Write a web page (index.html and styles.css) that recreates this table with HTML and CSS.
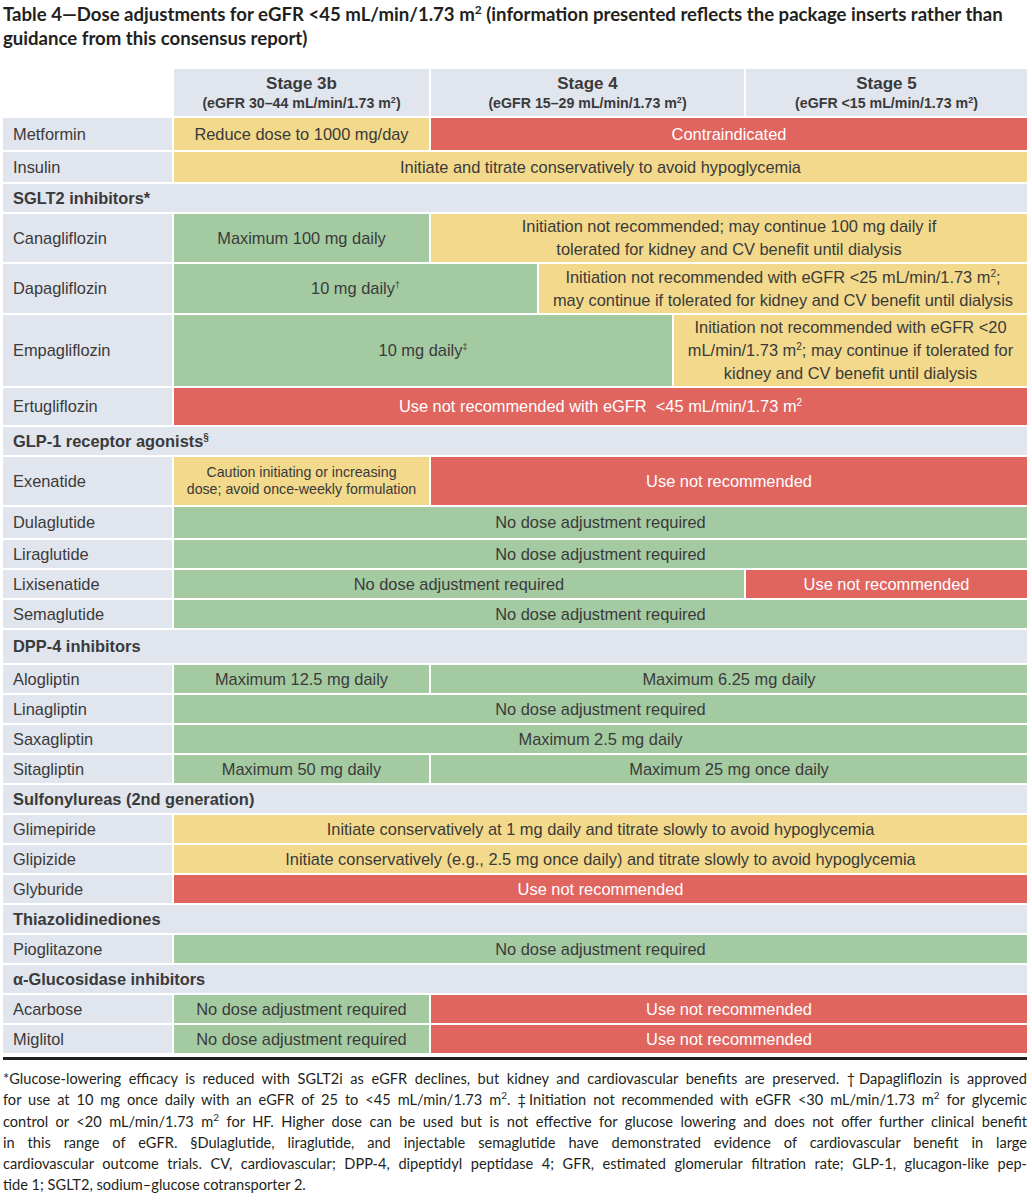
FILE: index.html
```html
<!DOCTYPE html>
<html lang="en">
<head>
<meta charset="utf-8">
<title>Table 4 — Dose adjustments for eGFR &lt;45</title>
<link rel="stylesheet" href="styles.css">
</head>
<body>
<div class="page">
  <h1 class="title">Table 4—Dose adjustments for eGFR &lt;45 mL/min/1.73 m<sup>2</sup> (information presented reflects the package inserts rather than<br>guidance from this consensus report)</h1>

  <div class="table">
    <div class="row head">
      <div class="blank"></div>
      <div class="hc c3b"><span class="stage">Stage 3b</span><span class="range">(eGFR 30–44 mL/min/1.73 m<sup>2</sup>)</span></div>
      <div class="hc c4"><span class="stage">Stage 4</span><span class="range">(eGFR 15–29 mL/min/1.73 m<sup>2</sup>)</span></div>
      <div class="hc c5"><span class="stage">Stage 5</span><span class="range">(eGFR &lt;15 mL/min/1.73 m<sup>2</sup>)</span></div>
    </div>

    <div class="row h32">
      <div class="name">Metformin</div>
      <div class="cell y c3b"><span>Reduce dose to 1000 mg/day</span></div>
      <div class="cell r c45"><span>Contraindicated</span></div>
    </div>
    <div class="row h30">
      <div class="name">Insulin</div>
      <div class="cell y call"><span>Initiate and titrate conservatively to avoid hypoglycemia</span></div>
    </div>

    <div class="row section"><div class="sec"><span>SGLT2 inhibitors*</span></div></div>
    <div class="row h48">
      <div class="name">Canagliflozin</div>
      <div class="cell g c3b"><span>Maximum 100 mg daily</span></div>
      <div class="cell y c45"><span>Initiation not recommended; may continue 100 mg daily if<br>tolerated for kidney and CV benefit until dialysis</span></div>
    </div>
    <div class="row h49">
      <div class="name">Dapagliflozin</div>
      <div class="cell g cdapa-g"><span>10 mg daily<sup class="fn">†</sup></span></div>
      <div class="cell y cdapa-y"><span>Initiation not recommended with eGFR &lt;25 mL/min/1.73 m<sup>2</sup>;<br>may continue if tolerated for kidney and CV benefit until dialysis</span></div>
    </div>
    <div class="row h71">
      <div class="name">Empagliflozin</div>
      <div class="cell g cempa-g"><span>10 mg daily<sup class="fn">‡</sup></span></div>
      <div class="cell y cempa-y"><span>Initiation not recommended with eGFR &lt;20<br>mL/min/1.73 m<sup>2</sup>; may continue if tolerated for<br>kidney and CV benefit until dialysis</span></div>
    </div>
    <div class="row h37">
      <div class="name">Ertugliflozin</div>
      <div class="cell r call"><span>Use not recommended with eGFR &nbsp;&lt;45 mL/min/1.73 m<sup>2</sup></span></div>
    </div>

    <div class="row section"><div class="sec"><span>GLP-1 receptor agonists<sup class="fn">§</sup></span></div></div>
    <div class="row h48">
      <div class="name">Exenatide</div>
      <div class="cell y c3b small"><span>Caution initiating or increasing<br>dose; avoid once-weekly formulation</span></div>
      <div class="cell r c45"><span>Use not recommended</span></div>
    </div>
    <div class="row h31">
      <div class="name">Dulaglutide</div>
      <div class="cell g call"><span>No dose adjustment required</span></div>
    </div>
    <div class="row">
      <div class="name">Liraglutide</div>
      <div class="cell g call"><span>No dose adjustment required</span></div>
    </div>
    <div class="row">
      <div class="name">Lixisenatide</div>
      <div class="cell g c34"><span>No dose adjustment required</span></div>
      <div class="cell r c5"><span>Use not recommended</span></div>
    </div>
    <div class="row">
      <div class="name">Semaglutide</div>
      <div class="cell g call"><span>No dose adjustment required</span></div>
    </div>

    <div class="row section h33"><div class="sec"><span>DPP-4 inhibitors</span></div></div>
    <div class="row">
      <div class="name">Alogliptin</div>
      <div class="cell g c3b"><span>Maximum 12.5 mg daily</span></div>
      <div class="cell g c45"><span>Maximum 6.25 mg daily</span></div>
    </div>
    <div class="row">
      <div class="name">Linagliptin</div>
      <div class="cell g call"><span>No dose adjustment required</span></div>
    </div>
    <div class="row">
      <div class="name">Saxagliptin</div>
      <div class="cell g call"><span>Maximum 2.5 mg daily</span></div>
    </div>
    <div class="row">
      <div class="name">Sitagliptin</div>
      <div class="cell g c3b"><span>Maximum 50 mg daily</span></div>
      <div class="cell g c45"><span>Maximum 25 mg once daily</span></div>
    </div>

    <div class="row section"><div class="sec"><span>Sulfonylureas (2nd generation)</span></div></div>
    <div class="row">
      <div class="name">Glimepiride</div>
      <div class="cell y call"><span>Initiate conservatively at 1 mg daily and titrate slowly to avoid hypoglycemia</span></div>
    </div>
    <div class="row">
      <div class="name">Glipizide</div>
      <div class="cell y call"><span>Initiate conservatively (e.g., 2.5 mg once daily) and titrate slowly to avoid hypoglycemia</span></div>
    </div>
    <div class="row">
      <div class="name">Glyburide</div>
      <div class="cell r call"><span>Use not recommended</span></div>
    </div>

    <div class="row section"><div class="sec"><span>Thiazolidinediones</span></div></div>
    <div class="row">
      <div class="name">Pioglitazone</div>
      <div class="cell g call"><span>No dose adjustment required</span></div>
    </div>

    <div class="row section"><div class="sec"><span>α-Glucosidase inhibitors</span></div></div>
    <div class="row">
      <div class="name">Acarbose</div>
      <div class="cell g c3b"><span>No dose adjustment required</span></div>
      <div class="cell r c45"><span>Use not recommended</span></div>
    </div>
    <div class="row">
      <div class="name">Miglitol</div>
      <div class="cell g c3b"><span>No dose adjustment required</span></div>
      <div class="cell r c45"><span>Use not recommended</span></div>
    </div>
  </div>

  <div class="rule"></div>

  <p class="notes">
    <span class="ln">*Glucose-lowering efficacy is reduced with SGLT2i as eGFR declines, but kidney and cardiovascular benefits are preserved. †Dapagliflozin is approved</span>
    <span class="ln">for use at 10 mg once daily with an eGFR of 25 to &lt;45 mL/min/1.73 m<sup>2</sup>. ‡Initiation not recommended with eGFR &lt;30 mL/min/1.73 m<sup>2</sup> for glycemic</span>
    <span class="ln">control or &lt;20 mL/min/1.73 m<sup>2</sup> for HF. Higher dose can be used but is not effective for glucose lowering and does not offer further clinical benefit</span>
    <span class="ln">in this range of eGFR. §Dulaglutide, liraglutide, and injectable semaglutide have demonstrated evidence of cardiovascular benefit in large</span>
    <span class="ln">cardiovascular outcome trials. CV, cardiovascular; DPP-4, dipeptidyl peptidase 4; GFR, estimated glomerular filtration rate; GLP-1, glucagon-like pep-</span>
    <span class="ln last">tide 1; SGLT2, sodium–glucose cotransporter 2.</span>
  </p>
</div>
</body>
</html>
```
FILE: styles.css
```css
html, body {
  margin: 0;
  padding: 0;
  background: #ffffff;
}

.page {
  width: 1024px;
  padding: 2px 5px 0 3px;
}

.title {
  margin: 0;
  font-family: Lato, "Open Sans", sans-serif;
  font-weight: 700;
  font-size: 18.6px;
  line-height: 24px;
  color: #231f20;
  white-space: nowrap;
}

.title sup {
  font-size: 12px;
  line-height: 0;
  vertical-align: 7px;
}

.table {
  margin-top: 19px;
  display: flex;
  flex-direction: column;
  gap: 2px;
  font-family: "Liberation Sans", Arial, sans-serif;
  font-size: 16.4px;
  color: #3a3a3a;
}

.row {
  display: grid;
  grid-template-columns: 169px 255px 106px 133px 70px 281px;
  column-gap: 2px;
  height: 28px;
}

.row.head { height: 47px; }
.h30 { height: 30px; }
.row.h31 { height: 31px; }
.h32 { height: 32px; }
.row.h33 { height: 33px; }
.h37 { height: 37px; }
.h48 { height: 48px; }
.h49 { height: 49px; }
.h71 { height: 71px; }

.blank { background: transparent; }

.hc {
  background: #e1e5ee;
  display: flex;
  flex-direction: column;
  align-items: center;
  justify-content: center;
  color: #3a3a3a;
  font-weight: 700;
}

.stage {
  font-size: 17px;
  line-height: 21px;
}

.range {
  font-size: 14.2px;
  line-height: 19px;
}

.range sup {
  font-size: 9px;
  line-height: 0;
  vertical-align: 5px;
}

.name {
  background: #e1e5ee;
  display: flex;
  align-items: center;
  padding-left: 10px;
}

.section {
  background: #e1e5ee;
}

.sec {
  grid-column: 1 / -1;
  display: flex;
  align-items: center;
  padding-left: 10px;
  font-weight: 700;
}

.cell {
  display: flex;
  align-items: center;
  justify-content: center;
  text-align: center;
  white-space: nowrap;
  line-height: 23px;
  min-width: 0;
}

.cell sup {
  font-size: 10px;
  line-height: 0;
  vertical-align: 6px;
}

.cell sup.fn { font-size: 9px; }

.sec sup.fn {
  font-size: 10px;
  line-height: 0;
  vertical-align: 6px;
  font-weight: 700;
}

.small {
  font-size: 14.2px;
  line-height: 17px;
}

.y { background: #f2d98b; }
.r { background: #e0655f; color: #ffffff; }
.g { background: #a4caa2; }

.c3b { grid-column: 2 / 3; }
.c4 { grid-column: 3 / 6; }
.c5 { grid-column: 6 / 7; }
.c45 { grid-column: 3 / 7; }
.c34 { grid-column: 2 / 6; }
.call { grid-column: 2 / 7; }
.cdapa-g { grid-column: 2 / 4; }
.cdapa-y { grid-column: 4 / 7; }
.cempa-g { grid-column: 2 / 5; }
.cempa-y { grid-column: 5 / 7; }

.rule {
  margin-top: 4px;
  height: 3px;
  background: #1e1e1e;
}

.notes {
  margin: 8px 0 0 0;
  font-family: Lato, "Open Sans", sans-serif;
  font-size: 14.6px;
  line-height: 21.3px;
  color: #231f20;
}

.ln {
  display: block;
  text-align: justify;
  text-align-last: justify;
  white-space: nowrap;
}

.ln.last {
  text-align-last: left;
}

.notes sup {
  font-size: 10px;
  line-height: 0;
  vertical-align: 6px;
}
```
